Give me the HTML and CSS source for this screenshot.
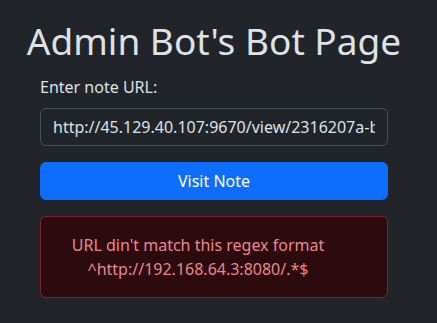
FILE: index.html
```html
<!DOCTYPE html>
<html lang="en">
<head>
    <meta charset="UTF-8">
    <meta name="viewport" content="width=device-width, initial-scale=1.0">
    <title>Admin Bot</title>
    <link rel="stylesheet" href="styles.css">
</head>
<body>
    <div class="container">
        <h1 class="title">Admin Bot's Bot Page</h1>

        <div class="content">
            <form class="visit-form">
                <label for="url" class="form-label">Enter note URL:</label>
                <input type="text" id="url" class="form-control" value="http://45.129.40.107:9670/view/2316207a-b4c1-4e0f-9a6d-5f1c0e2b7d31">
                <button type="submit" class="btn">Visit Note</button>
            </form>

            <div class="alert">
                URL din't match this regex format<br>
                ^http://192.168.64.3:8080/.*$
            </div>
        </div>
    </div>
</body>
</html>
```

FILE: styles.css
```css
* {
    margin: 0;
    padding: 0;
    box-sizing: border-box;
}

body {
    font-family: 'Noto Sans', sans-serif;
    font-size: 16px;
    line-height: 1.5;
    background: #212529;
    color: #dee2e6;
}

.container {
    width: 428px;
    padding-top: 19px;
}

.title {
    font-size: 37px;
    font-weight: 400;
    line-height: 1.2;
    text-align: center;
    white-space: nowrap;
    margin-bottom: 12px;
}

.content {
    padding: 0 40px;
}

.visit-form {
    display: flex;
    flex-direction: column;
}

.form-label {
    margin-bottom: 9px;
}

.form-control {
    font-family: inherit;
    font-size: 16px;
    line-height: 1.5;
    color: #dee2e6;
    background: #212529;
    border: 1px solid #495057;
    border-radius: 6px;
    padding: 6px 12px;
    outline: none;
}

.btn {
    font-family: inherit;
    font-size: 16px;
    line-height: 1.5;
    margin-top: 16px;
    padding: 6px 12px;
    color: #fff;
    background: #0d6efd;
    border: 1px solid #0d6efd;
    border-radius: 6px;
    cursor: pointer;
}

.alert {
    margin-top: 16px;
    padding: 16px 48px 16px 16px;
    text-align: center;
    color: #ea868f;
    background: #2c0b0e;
    border: 1px solid #842029;
    border-radius: 6px;
}
```
